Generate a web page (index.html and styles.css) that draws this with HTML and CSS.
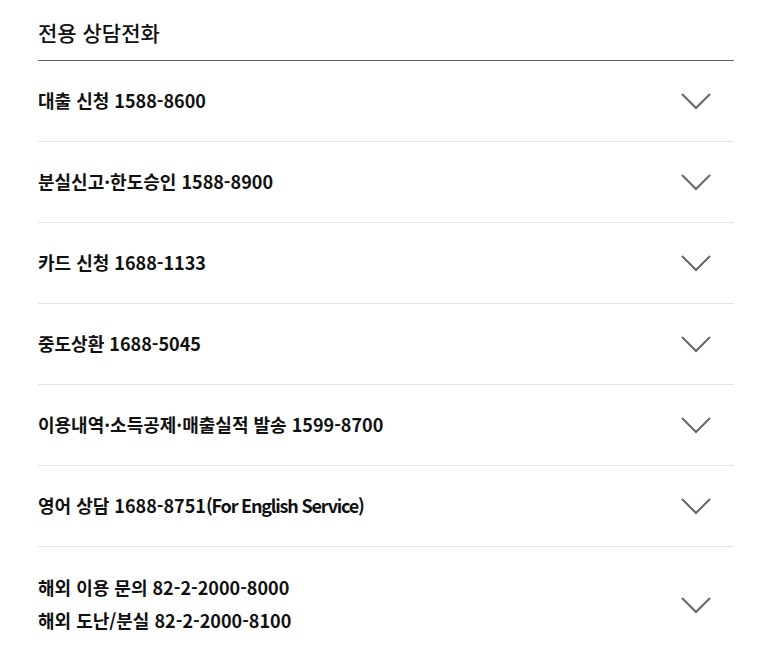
FILE: index.html
```html
<!DOCTYPE html>
<html lang="ko">
<head>
<meta charset="utf-8">
<link rel="stylesheet" href="styles.css">
</head>
<body>
<div class="wrap">
  <h2 class="title">전용 상담전화</h2>
  <ul class="list">
    <li class="row"><span class="label">대출 신청 1588-8600</span><svg class="chev" viewBox="0 0 30 17"><polyline points="1,1 15,15 29,1"/></svg></li>
    <li class="row"><span class="label">분실신고·한도승인 1588-8900</span><svg class="chev" viewBox="0 0 30 17"><polyline points="1,1 15,15 29,1"/></svg></li>
    <li class="row"><span class="label">카드 신청 1688-1133</span><svg class="chev" viewBox="0 0 30 17"><polyline points="1,1 15,15 29,1"/></svg></li>
    <li class="row"><span class="label">중도상환 1688-5045</span><svg class="chev" viewBox="0 0 30 17"><polyline points="1,1 15,15 29,1"/></svg></li>
    <li class="row"><span class="label">이용내역·소득공제·매출실적 발송 1599-8700</span><svg class="chev" viewBox="0 0 30 17"><polyline points="1,1 15,15 29,1"/></svg></li>
    <li class="row"><span class="label">영어 상담 1688-8751<span class="en">(For English Service)</span></span><svg class="chev" viewBox="0 0 30 17"><polyline points="1,1 15,15 29,1"/></svg></li>
    <li class="row row-multi"><span class="label">해외 이용 문의 82-2-2000-8000<br>해외 도난/분실 82-2-2000-8100</span><svg class="chev" viewBox="0 0 30 17"><polyline points="1,1 15,15 29,1"/></svg></li>
  </ul>
</div>
</body>
</html>
```

FILE: styles.css
```css
html, body {
  margin: 0;
  padding: 0;
  background: #fff;
}
body {
  font-family: "Noto Sans CJK KR", "Noto Sans", sans-serif;
  color: #111;
}
.wrap {
  margin-left: 38px;
  width: 696px;
}
.title {
  margin: 0;
  height: 61px;
  box-sizing: border-box;
  padding-top: 18px;
  font-size: 21px;
  line-height: 28px;
  font-weight: 500;
  border-bottom: 1px solid #666;
}
.list {
  list-style: none;
  margin: 0;
  padding: 0;
}
.row {
  display: flex;
  align-items: center;
  justify-content: space-between;
  height: 81px;
  box-sizing: border-box;
  padding-bottom: 2px;
  border-bottom: 1px solid #e3e3e3;
}
.label {
  font-size: 18px;
  font-weight: 600;
  line-height: 33px;
}
.en {
  letter-spacing: -1.2px;
}
.row-multi {
  height: auto;
  border-bottom: none;
  padding: 24px 0 25px;
}
.chev {
  width: 30px;
  height: 17px;
  margin-right: 23px;
  margin-top: 2px;
  fill: none;
  stroke: #666;
  stroke-width: 2;
}
```
